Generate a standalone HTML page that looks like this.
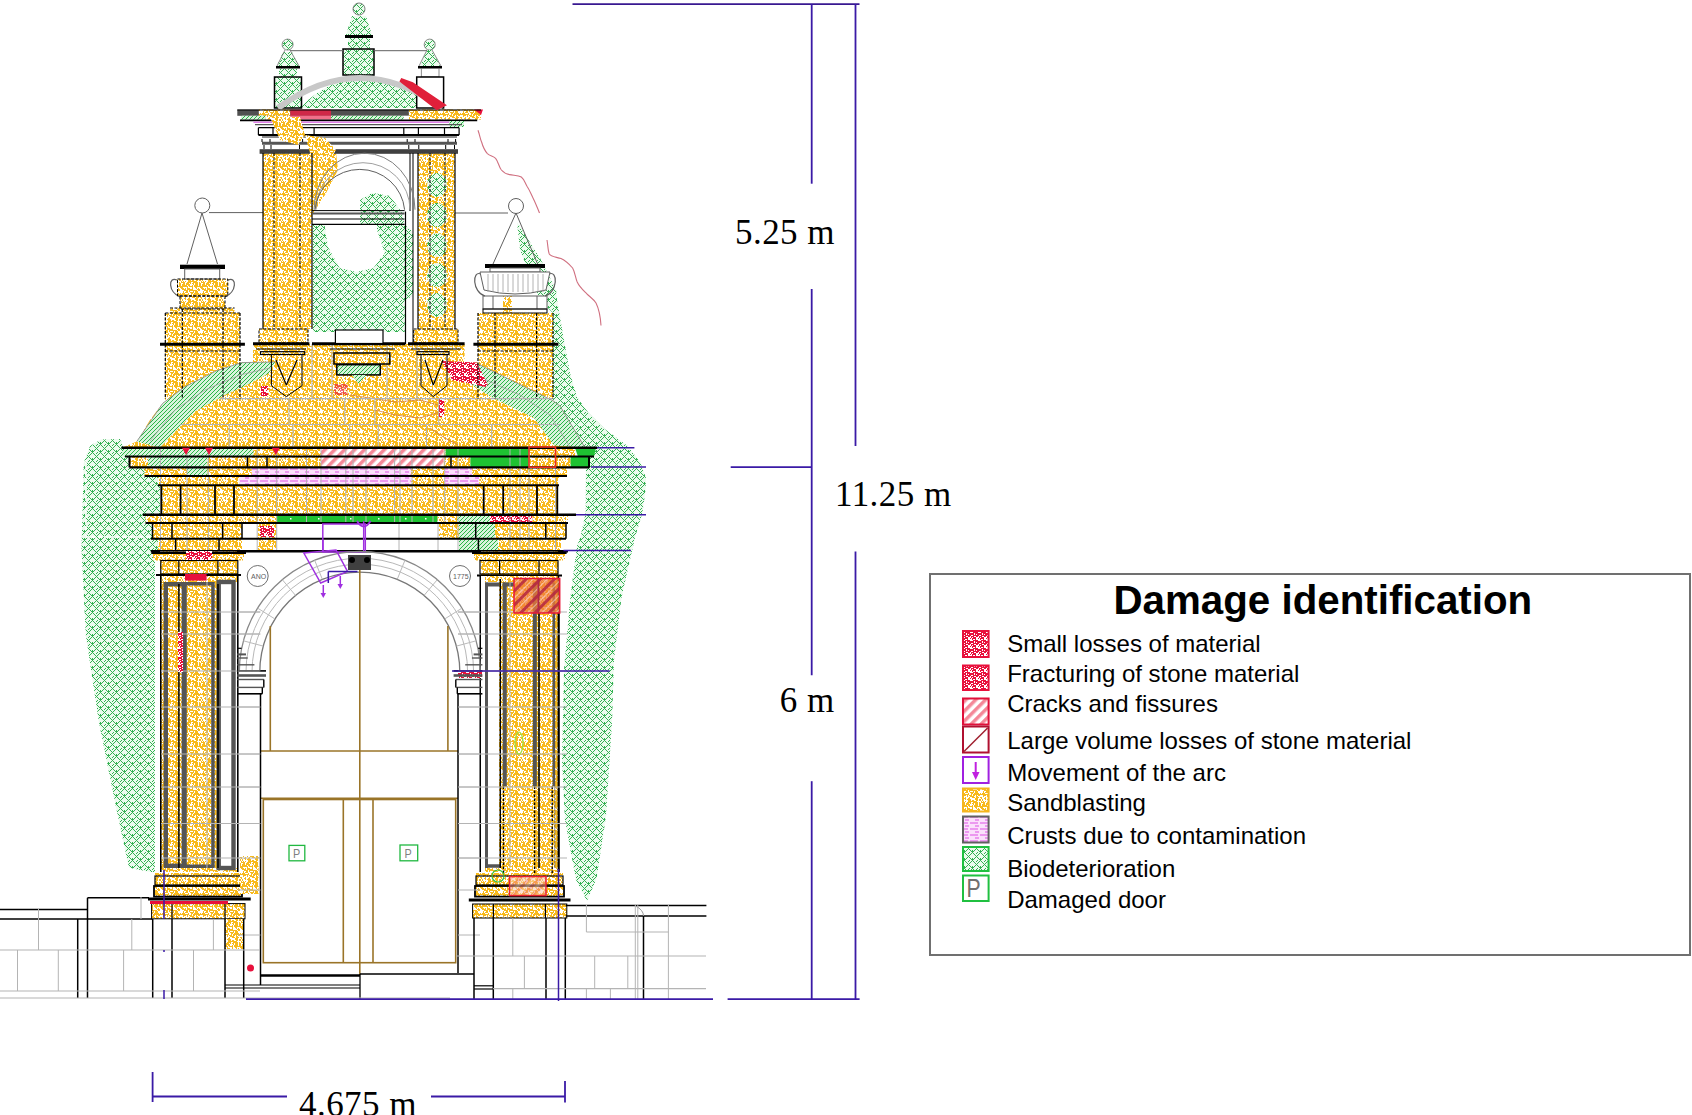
<!DOCTYPE html>
<html><head><meta charset="utf-8"><style>
html,body{margin:0;padding:0;background:#fff;width:1692px;height:1115px;overflow:hidden}
svg{display:block}
</style></head><body>
<svg width="1692" height="1115" viewBox="0 0 1692 1115">
<defs><pattern id="yel" width="20" height="20" patternUnits="userSpaceOnUse"><rect width="20" height="20" fill="#f8ba1c"/><g fill="#fff"><rect x="1" y="0" width="1" height="1"/><rect x="3" y="0" width="5" height="1"/><rect x="11" y="0" width="1" height="1"/><rect x="14" y="0" width="2" height="1"/><rect x="18" y="0" width="1" height="1"/><rect x="0" y="1" width="1" height="1"/><rect x="2" y="1" width="1" height="1"/><rect x="4" y="1" width="1" height="1"/><rect x="6" y="1" width="2" height="1"/><rect x="17" y="1" width="3" height="1"/><rect x="0" y="2" width="1" height="1"/><rect x="5" y="2" width="2" height="1"/><rect x="11" y="2" width="2" height="1"/><rect x="18" y="2" width="1" height="1"/><rect x="1" y="3" width="2" height="1"/><rect x="5" y="3" width="1" height="1"/><rect x="9" y="3" width="1" height="1"/><rect x="11" y="3" width="1" height="1"/><rect x="14" y="3" width="1" height="1"/><rect x="18" y="3" width="1" height="1"/><rect x="1" y="4" width="1" height="1"/><rect x="5" y="4" width="1" height="1"/><rect x="10" y="4" width="3" height="1"/><rect x="14" y="4" width="1" height="1"/><rect x="18" y="4" width="1" height="1"/><rect x="1" y="5" width="1" height="1"/><rect x="7" y="5" width="1" height="1"/><rect x="10" y="5" width="2" height="1"/><rect x="13" y="5" width="1" height="1"/><rect x="18" y="5" width="1" height="1"/><rect x="8" y="6" width="1" height="1"/><rect x="13" y="6" width="1" height="1"/><rect x="3" y="7" width="4" height="1"/><rect x="8" y="7" width="4" height="1"/><rect x="13" y="7" width="2" height="1"/><rect x="17" y="7" width="3" height="1"/><rect x="0" y="8" width="1" height="1"/><rect x="4" y="8" width="1" height="1"/><rect x="6" y="8" width="1" height="1"/><rect x="10" y="8" width="2" height="1"/><rect x="13" y="8" width="3" height="1"/><rect x="17" y="8" width="1" height="1"/><rect x="19" y="8" width="1" height="1"/><rect x="0" y="9" width="2" height="1"/><rect x="6" y="9" width="1" height="1"/><rect x="13" y="9" width="4" height="1"/><rect x="0" y="10" width="4" height="1"/><rect x="8" y="10" width="1" height="1"/><rect x="17" y="10" width="1" height="1"/><rect x="0" y="11" width="3" height="1"/><rect x="4" y="11" width="2" height="1"/><rect x="8" y="11" width="1" height="1"/><rect x="10" y="11" width="3" height="1"/><rect x="14" y="11" width="1" height="1"/><rect x="18" y="11" width="2" height="1"/><rect x="0" y="12" width="3" height="1"/><rect x="4" y="12" width="1" height="1"/><rect x="8" y="12" width="2" height="1"/><rect x="14" y="12" width="1" height="1"/><rect x="18" y="12" width="2" height="1"/><rect x="1" y="13" width="1" height="1"/><rect x="5" y="13" width="3" height="1"/><rect x="9" y="13" width="2" height="1"/><rect x="13" y="13" width="1" height="1"/><rect x="19" y="13" width="1" height="1"/><rect x="9" y="14" width="2" height="1"/><rect x="12" y="14" width="1" height="1"/><rect x="0" y="15" width="3" height="1"/><rect x="6" y="15" width="1" height="1"/><rect x="8" y="15" width="1" height="1"/><rect x="12" y="15" width="1" height="1"/><rect x="15" y="15" width="1" height="1"/><rect x="17" y="15" width="1" height="1"/><rect x="0" y="16" width="3" height="1"/><rect x="4" y="16" width="3" height="1"/><rect x="8" y="16" width="2" height="1"/><rect x="14" y="16" width="2" height="1"/><rect x="18" y="16" width="2" height="1"/><rect x="2" y="17" width="3" height="1"/><rect x="6" y="17" width="3" height="1"/><rect x="10" y="17" width="2" height="1"/><rect x="15" y="17" width="1" height="1"/><rect x="19" y="17" width="1" height="1"/><rect x="0" y="18" width="1" height="1"/><rect x="2" y="18" width="2" height="1"/><rect x="6" y="18" width="2" height="1"/><rect x="10" y="18" width="5" height="1"/><rect x="18" y="18" width="2" height="1"/><rect x="1" y="19" width="1" height="1"/><rect x="3" y="19" width="2" height="1"/><rect x="6" y="19" width="1" height="1"/><rect x="11" y="19" width="4" height="1"/><rect x="18" y="19" width="1" height="1"/></g></pattern><pattern id="grn" width="8" height="8" patternUnits="userSpaceOnUse"><rect width="8" height="8" fill="#ecfbee"/><g fill="#34b052"><rect x="0" y="0" width="1" height="1"/><rect x="0" y="5" width="1" height="1"/><rect x="1" y="1" width="1" height="1"/><rect x="1" y="4" width="1" height="1"/><rect x="1" y="7" width="1" height="1"/><rect x="2" y="2" width="1" height="1"/><rect x="2" y="6" width="1" height="1"/><rect x="3" y="3" width="1" height="1"/><rect x="3" y="5" width="1" height="1"/><rect x="4" y="2" width="1" height="1"/><rect x="4" y="3" width="1" height="1"/><rect x="4" y="4" width="1" height="1"/><rect x="5" y="3" width="1" height="1"/><rect x="5" y="5" width="1" height="1"/><rect x="6" y="2" width="1" height="1"/><rect x="6" y="6" width="1" height="1"/><rect x="7" y="1" width="1" height="1"/><rect x="7" y="7" width="1" height="1"/></g></pattern><pattern id="grn2" width="4" height="4" patternUnits="userSpaceOnUse"><rect width="4" height="4" fill="#d8f4dc"/><g fill="#2ab446"><rect x="0" y="0" width="1" height="1"/><rect x="2" y="2" width="1" height="1"/><rect x="1" y="3" width="1" height="1"/><rect x="3" y="1" width="1" height="1"/></g></pattern><pattern id="red" width="8" height="8" patternUnits="userSpaceOnUse"><rect width="8" height="8" fill="#e8103c"/><g fill="#fff"><rect x="2" y="0" width="3" height="1"/><rect x="6" y="1" width="1" height="1"/><rect x="0" y="2" width="1" height="1"/><rect x="6" y="2" width="1" height="1"/><rect x="3" y="3" width="2" height="1"/><rect x="2" y="4" width="1" height="1"/><rect x="6" y="4" width="2" height="1"/><rect x="0" y="5" width="3" height="1"/><rect x="4" y="5" width="1" height="1"/><rect x="0" y="6" width="2" height="1"/><rect x="3" y="6" width="1" height="1"/><rect x="0" y="7" width="4" height="1"/><rect x="5" y="7" width="2" height="1"/></g></pattern><pattern id="crk" width="7" height="7" patternUnits="userSpaceOnUse" patternTransform="rotate(45)"><rect width="7" height="7" fill="#fff"/><rect width="3.5" height="7" fill="#f48898"/></pattern><pattern id="dcrk" width="10" height="10" patternUnits="userSpaceOnUse" patternTransform="rotate(45)"><rect x="0" width="3" height="10" fill="#b02040" opacity="0.8"/><rect x="6" width="1" height="10" fill="#fff" opacity="0.5"/></pattern><pattern id="pnk" width="10" height="6" patternUnits="userSpaceOnUse"><rect width="10" height="6" fill="#fbe0fb"/><rect x="0" y="0" width="8" height="2" fill="#ec98f0"/><rect x="5" y="3" width="4" height="2" fill="#ec98f0"/></pattern></defs>
<rect width="1692" height="1115" fill="#fff"/>
<polygon points="100.9,439.4 120,439 124,448 161,448 161,552 155,552 155,872 150.4,872 128.9,867.7 116,807 98.7,721 85.8,635 81.5,549 83.7,463 90,446" fill="url(#grn)" stroke="none" stroke-width="1" />
<polygon points="517,222 526,236 540,258 556,290 557,300 564,340 570,373 577,397 588.5,413 604.6,429 627,445.4 640,461.5 646,478 645.5,490 642.4,513 635.3,536.4 621.6,597 614,660 612,722 606,816 596.5,879 587,901 576,880 565,820 562,760 564,670 570,600 577,546 580.4,537 585.7,513 586,467 594.5,447.7 560,447 553,400 553,313 540,300 528,270 520,250" fill="url(#grn)" stroke="none" stroke-width="1" />
<path d="M313,224.8 L324.5,224.8 L328,247 L339.6,268 L356.5,272 L373.5,268 L384.8,253 L377,230 L377,224.8 L360,224.8 L360,200 L372,192.8 L390,196 L401.7,212 L404.6,224.8 L413,232 L413,296 L404.6,300 L404.6,332 L313,332 Z" fill="url(#grn)" stroke="none" stroke-width="1" />
<polygon points="343,49 374,49 374,75 343,75" fill="url(#grn)" stroke="none" stroke-width="1" />
<polygon points="348,38 370,38 370,49 348,49" fill="url(#grn)" stroke="none" stroke-width="1" />
<polygon points="352,16 366,16 372,35 346,35" fill="url(#grn)" stroke="none" stroke-width="1" />
<circle cx="359" cy="9" r="6" fill="url(#grn)" stroke="none" stroke-width="1" />
<polygon points="274.5,77 301.5,77 301.5,108 274.5,108" fill="url(#grn)" stroke="none" stroke-width="1" />
<polygon points="279,68.5 297,68.5 297,77 279,77" fill="url(#grn)" stroke="none" stroke-width="1" />
<polygon points="283,52 292,52 299,66 277,66" fill="url(#grn)" stroke="none" stroke-width="1" />
<path d="M300,108 C315,92 330,84 345,80 L375,78 C395,82 420,92 440,108 Z" fill="url(#grn)" stroke="none" stroke-width="1" />
<polygon points="122,447.7 136.8,441.5 150,420 162.6,403.4 184.4,387 216,371 241.5,362.6 253,362 253,344 474,344 478,362.6 520,385 553,400.7 560,406 585,447.7" fill="url(#yel)" stroke="none" stroke-width="1" />
<rect x="170" y="308" width="64.6" height="5" fill="url(#yel)" stroke="none" stroke-width="1" />
<rect x="165.3" y="313" width="74.7" height="87" fill="url(#yel)" stroke="none" stroke-width="1" />
<rect x="478" y="313" width="75" height="87" fill="url(#yel)" stroke="none" stroke-width="1" />
<rect x="177.5" y="279" width="50.3" height="17" fill="url(#yel)" stroke="none" stroke-width="1" />
<rect x="180" y="296" width="45" height="13" fill="url(#yel)" stroke="none" stroke-width="1" />
<rect x="483" y="296" width="64" height="13" fill="#fff" stroke="none" stroke-width="1" />
<rect x="503" y="296" width="9" height="17" fill="url(#yel)" stroke="none" stroke-width="1" />
<rect x="263" y="153" width="49" height="176" fill="url(#yel)" stroke="none" stroke-width="1" />
<rect x="259" y="329" width="49" height="15" fill="url(#yel)" stroke="none" stroke-width="1" />
<rect x="418" y="153" width="37" height="176" fill="url(#yel)" stroke="none" stroke-width="1" />
<rect x="413.7" y="329" width="44.3" height="15" fill="url(#yel)" stroke="none" stroke-width="1" />
<polygon points="312,153 336,153 338,170 325,195 312,215" fill="url(#yel)" stroke="none" stroke-width="1" />
<rect x="464.6" y="330" width="13.4" height="32.6" fill="#fff" stroke="none" stroke-width="1" />
<polygon points="136.8,441.5 162.6,403.4 184.4,387 216,371 241.5,362.6 275.4,362 268.6,373.5 245.5,385.7 225,395 195,411.6 169.4,437.4 160,447.7" fill="url(#grn2)" stroke="none" stroke-width="1" />
<polygon points="478,364 553,400.7 560,406 585,447.7 554,445.5 534,418 493,398 471.4,384.4" fill="url(#grn2)" stroke="none" stroke-width="1" />
<polyline points="136.8,441.5 162.6,403.4 184.4,387 216,371 241.5,362.6 275.4,362" fill="none" stroke="#909090" stroke-width="0.9" />
<polyline points="150,441 175,410 205,390 240,375 270,368" fill="none" stroke="#a0a0a0" stroke-width="0.8" />
<polyline points="478,364 553,400.7 560,406 585,447.7" fill="none" stroke="#909090" stroke-width="0.9" />
<polyline points="475,375 520,395 550,415 570,447" fill="none" stroke="#a0a0a0" stroke-width="0.8" />
<polyline points="350,395 370,398 395,402 420,400 438,405" fill="none" stroke="#d08040" stroke-width="0.8" />
<polyline points="375,410 395,415 420,418 440,412" fill="none" stroke="#d08040" stroke-width="0.8" />
<polyline points="430,428 445,438 458,445" fill="none" stroke="#d08040" stroke-width="0.8" />
<polygon points="441.5,361 476.8,362.6 487.7,384.4 486.3,387 452.3,380.3" fill="url(#red)" stroke="none" stroke-width="1" />
<rect x="334" y="384" width="13.7" height="11" fill="url(#red)" stroke="none" stroke-width="1" opacity="0.6"/>
<rect x="438.7" y="399" width="5.5" height="18" fill="url(#red)" stroke="none" stroke-width="1" />
<rect x="261" y="386" width="7" height="10" fill="url(#red)" stroke="none" stroke-width="1" />
<ellipse cx="437" cy="185" rx="10" ry="12" fill="url(#grn)"/>
<ellipse cx="437" cy="215" rx="10" ry="12" fill="url(#grn)"/>
<ellipse cx="437" cy="245" rx="10" ry="12" fill="url(#grn)"/>
<ellipse cx="437" cy="275" rx="10" ry="12" fill="url(#grn)"/>
<ellipse cx="437" cy="305" rx="10" ry="12" fill="url(#grn)"/>
<line x1="219.7" y1="398.6" x2="553" y2="398.6" stroke="#b4b4b4" stroke-width="1.2" />
<line x1="180.3" y1="424.5" x2="560" y2="424.5" stroke="#b4b4b4" stroke-width="1.2" />
<line x1="289" y1="399" x2="289" y2="424.5" stroke="#b4b4b4" stroke-width="1" />
<line x1="344.8" y1="399" x2="344.8" y2="424.5" stroke="#b4b4b4" stroke-width="1" />
<line x1="374.9" y1="399" x2="374.9" y2="424.5" stroke="#b4b4b4" stroke-width="1" />
<line x1="438.7" y1="399" x2="438.7" y2="424.5" stroke="#b4b4b4" stroke-width="1" />
<line x1="229.2" y1="424.5" x2="229.2" y2="447" stroke="#b4b4b4" stroke-width="1" />
<line x1="293" y1="424.5" x2="293" y2="447" stroke="#b4b4b4" stroke-width="1" />
<line x1="349.7" y1="424.5" x2="349.7" y2="447" stroke="#b4b4b4" stroke-width="1" />
<line x1="378.3" y1="424.5" x2="378.3" y2="447" stroke="#b4b4b4" stroke-width="1" />
<line x1="426.5" y1="424.5" x2="426.5" y2="447" stroke="#b4b4b4" stroke-width="1" />
<line x1="491.7" y1="424.5" x2="491.7" y2="447" stroke="#b4b4b4" stroke-width="1" />
<line x1="312" y1="344" x2="312" y2="399" stroke="#b4b4b4" stroke-width="1" />
<line x1="332" y1="344" x2="332" y2="399" stroke="#b4b4b4" stroke-width="1" />
<line x1="387" y1="344" x2="387" y2="399" stroke="#b4b4b4" stroke-width="1" />
<line x1="417" y1="344" x2="417" y2="399" stroke="#b4b4b4" stroke-width="1" />
<line x1="253" y1="343.8" x2="309.4" y2="343.8" stroke="#000" stroke-width="3" />
<line x1="312" y1="343.8" x2="405.4" y2="343.8" stroke="#000" stroke-width="3" />
<line x1="408" y1="343.8" x2="464.6" y2="343.8" stroke="#000" stroke-width="3" />
<line x1="256" y1="349" x2="306" y2="349" stroke="#000" stroke-width="1.2" />
<line x1="411" y1="349" x2="461" y2="349" stroke="#000" stroke-width="1.2" />
<rect x="260.5" y="351.7" width="44.2" height="2.8" fill="none" stroke="#000" stroke-width="1.2" />
<rect x="417" y="351.7" width="32" height="2.8" fill="none" stroke="#000" stroke-width="1.2" />
<polygon points="271.4,354.5 302,354.5 302,385.7 286.3,396.6 271.4,385.7" fill="none" stroke="#000" stroke-width="1" />
<polygon points="421,354.5 447,354.5 447,385.7 433.3,396.6 421,385.7" fill="none" stroke="#000" stroke-width="1" />
<line x1="276" y1="360" x2="286.3" y2="385" stroke="#000" stroke-width="1.2" />
<line x1="297" y1="360" x2="286.3" y2="385" stroke="#000" stroke-width="1.2" />
<line x1="425" y1="360" x2="433.3" y2="385" stroke="#000" stroke-width="1.2" />
<line x1="443" y1="360" x2="433.3" y2="385" stroke="#000" stroke-width="1.2" />
<line x1="330" y1="349" x2="395" y2="349" stroke="#000" stroke-width="1.2" />
<rect x="334" y="353" width="55.8" height="11" fill="none" stroke="#000" stroke-width="1.5" />
<rect x="336.8" y="364.7" width="43.5" height="10.2" fill="url(#grn2)" stroke="#000" stroke-width="1.5" />
<polygon points="352,375 366,375 358.5,384" fill="url(#grn2)" stroke="none" stroke-width="1" />
<line x1="160" y1="344.3" x2="244.9" y2="344.3" stroke="#000" stroke-width="3" />
<line x1="473.4" y1="344.3" x2="558.4" y2="344.3" stroke="#000" stroke-width="3" />
<line x1="165.3" y1="313" x2="165.3" y2="399" stroke="#000" stroke-width="1.2" stroke-dasharray="3,1.5"/>
<line x1="240" y1="313" x2="240" y2="399" stroke="#000" stroke-width="1.2" stroke-dasharray="3,1.5"/>
<line x1="182.3" y1="309" x2="182.3" y2="399" stroke="#000" stroke-width="1.2" stroke-dasharray="3,1.5"/>
<line x1="223" y1="309" x2="223" y2="399" stroke="#000" stroke-width="1.2" stroke-dasharray="3,1.5"/>
<line x1="478" y1="313" x2="478" y2="399" stroke="#000" stroke-width="1.2" stroke-dasharray="3,1.5"/>
<line x1="553" y1="313" x2="553" y2="399" stroke="#000" stroke-width="1.2" stroke-dasharray="3,1.5"/>
<line x1="495" y1="313" x2="495" y2="399" stroke="#000" stroke-width="1.2" stroke-dasharray="3,1.5"/>
<line x1="536.6" y1="313" x2="536.6" y2="399" stroke="#000" stroke-width="1.2" stroke-dasharray="3,1.5"/>
<line x1="165.3" y1="351" x2="240" y2="351" stroke="#000" stroke-width="1.2" stroke-dasharray="3,1.5"/>
<line x1="478" y1="351" x2="553" y2="351" stroke="#000" stroke-width="1.2" stroke-dasharray="3,1.5"/>
<line x1="170" y1="308" x2="234.6" y2="308" stroke="#000" stroke-width="1.2" stroke-dasharray="3,1.5"/>
<line x1="165.3" y1="313" x2="240" y2="313" stroke="#000" stroke-width="1.2" stroke-dasharray="3,1.5"/>
<circle cx="202.3" cy="205.5" r="7.5" fill="#fff" stroke="#606060" stroke-width="1" />
<line x1="209" y1="212.6" x2="263" y2="212.6" stroke="#606060" stroke-width="1" />
<line x1="202" y1="213" x2="187" y2="264" stroke="#606060" stroke-width="1" />
<line x1="202" y1="213" x2="217.5" y2="264" stroke="#606060" stroke-width="1" />
<rect x="180" y="264.7" width="45" height="4.3" fill="#000" stroke="none" stroke-width="1" />
<rect x="184.7" y="269" width="35" height="10" fill="#fff" stroke="#606060" stroke-width="1" />
<path d="M177,280 C168,276 168,292 180,297" fill="none" stroke="#606060" stroke-width="1.2" />
<path d="M228,280 C237,276 237,292 225,297" fill="none" stroke="#606060" stroke-width="1.2" />
<rect x="177.5" y="279" width="50.3" height="17" fill="none" stroke="#000" stroke-width="1" stroke-dasharray="3,1.5"/>
<rect x="180" y="296" width="45" height="13" fill="none" stroke="#000" stroke-width="1" stroke-dasharray="3,1.5"/>
<circle cx="516" cy="206" r="7.5" fill="#fff" stroke="#606060" stroke-width="1" />
<line x1="455" y1="213" x2="508" y2="213" stroke="#606060" stroke-width="1" />
<line x1="516" y1="213" x2="493" y2="264" stroke="#606060" stroke-width="1" />
<line x1="516" y1="213" x2="537.6" y2="264" stroke="#606060" stroke-width="1" />
<rect x="485" y="264" width="60" height="4" fill="#000" stroke="none" stroke-width="1" />
<rect x="490" y="268" width="50" height="4" fill="#fff" stroke="#606060" stroke-width="1" />
<path d="M481,274 C472,270 472,292 485,296" fill="none" stroke="#606060" stroke-width="1.2" />
<path d="M549,274 C558,270 558,292 545,296" fill="none" stroke="#606060" stroke-width="1.2" />
<path d="M480,272 L550,272 L546,290 Q515,298 484,290 Z" fill="#fff" stroke="#606060" stroke-width="1" />
<line x1="488" y1="274" x2="488" y2="292" stroke="#a0a0a0" stroke-width="0.8" />
<line x1="493" y1="274" x2="493" y2="292" stroke="#a0a0a0" stroke-width="0.8" />
<line x1="498" y1="274" x2="498" y2="292" stroke="#a0a0a0" stroke-width="0.8" />
<line x1="503" y1="274" x2="503" y2="292" stroke="#a0a0a0" stroke-width="0.8" />
<line x1="508" y1="274" x2="508" y2="292" stroke="#a0a0a0" stroke-width="0.8" />
<line x1="513" y1="274" x2="513" y2="292" stroke="#a0a0a0" stroke-width="0.8" />
<line x1="518" y1="274" x2="518" y2="292" stroke="#a0a0a0" stroke-width="0.8" />
<line x1="523" y1="274" x2="523" y2="292" stroke="#a0a0a0" stroke-width="0.8" />
<line x1="528" y1="274" x2="528" y2="292" stroke="#a0a0a0" stroke-width="0.8" />
<line x1="533" y1="274" x2="533" y2="292" stroke="#a0a0a0" stroke-width="0.8" />
<line x1="538" y1="274" x2="538" y2="292" stroke="#a0a0a0" stroke-width="0.8" />
<line x1="543" y1="274" x2="543" y2="292" stroke="#a0a0a0" stroke-width="0.8" />
<rect x="483" y="296" width="64" height="13" fill="none" stroke="#606060" stroke-width="1" />
<line x1="493" y1="296" x2="493" y2="309" stroke="#606060" stroke-width="1" />
<line x1="537" y1="296" x2="537" y2="309" stroke="#606060" stroke-width="1" />
<rect x="483" y="309" width="64" height="4" fill="none" stroke="#000" stroke-width="1" />
<circle cx="359" cy="9" r="6" fill="none" stroke="#606060" stroke-width="0.8" />
<rect x="345" y="35" width="28" height="3" fill="#000" stroke="none" stroke-width="1" />
<rect x="343" y="49" width="31" height="26" fill="none" stroke="#000" stroke-width="1.5" />
<line x1="290" y1="50.7" x2="343" y2="50.7" stroke="#606060" stroke-width="1" />
<line x1="374" y1="50.7" x2="427" y2="50.7" stroke="#606060" stroke-width="1" />
<rect x="276" y="66" width="24" height="2.5" fill="#000" stroke="none" stroke-width="1" />
<rect x="418" y="66" width="24" height="2.5" fill="#000" stroke="none" stroke-width="1" />
<circle cx="287.6" cy="44.6" r="5.5" fill="url(#grn)" stroke="#707070" stroke-width="0.8" />
<circle cx="429.7" cy="44.6" r="5.5" fill="url(#grn)" stroke="#707070" stroke-width="0.8" />
<polygon points="427,50 432,50 440,66 420,66" fill="url(#grn)" stroke="none" stroke-width="1" />
<rect x="421.3" y="68.5" width="17.7" height="8.5" fill="#fff" stroke="#707070" stroke-width="0.8" />
<line x1="285" y1="50" x2="277" y2="66" stroke="#707070" stroke-width="0.8" />
<line x1="290" y1="50" x2="299" y2="66" stroke="#707070" stroke-width="0.8" />
<line x1="427" y1="50" x2="419" y2="66" stroke="#707070" stroke-width="0.8" />
<line x1="432" y1="50" x2="441" y2="66" stroke="#707070" stroke-width="0.8" />
<rect x="274.5" y="77" width="27" height="31" fill="none" stroke="#000" stroke-width="1.5" />
<rect x="416.7" y="77" width="26.9" height="31" fill="#fff" stroke="#000" stroke-width="1.5" />
<path d="M278,108 Q360,48 442,108" fill="none" stroke="#c8c8c8" stroke-width="6" />
<rect x="237.3" y="109.6" width="243.7" height="6.2" fill="#505050" stroke="none" stroke-width="1" />
<rect x="258.8" y="109.6" width="31.5" height="6.2" fill="url(#yel)" stroke="none" stroke-width="1" />
<rect x="290.3" y="109.6" width="40.7" height="6.2" fill="#d02848" stroke="none" stroke-width="1" />
<rect x="408.8" y="109.6" width="72.2" height="10" fill="url(#yel)" stroke="none" stroke-width="1" />
<polygon points="474,109.6 483,109.6 481,115" fill="#e8103c" stroke="none" stroke-width="1" />
<rect x="241" y="115.8" width="24.7" height="3.8" fill="url(#grn2)" stroke="none" stroke-width="1" />
<rect x="265.7" y="115.8" width="24.6" height="3.8" fill="url(#yel)" stroke="none" stroke-width="1" />
<rect x="290.3" y="115.8" width="40.7" height="3.8" fill="#f0708a" stroke="none" stroke-width="1" />
<rect x="331" y="115.8" width="72.8" height="3.8" fill="url(#grn2)" stroke="none" stroke-width="1" />
<rect x="403.8" y="115.8" width="5" height="3.8" fill="#fff" stroke="none" stroke-width="1" />
<line x1="237.3" y1="110" x2="481" y2="110" stroke="#000" stroke-width="1.2" />
<line x1="240" y1="120.4" x2="477.2" y2="120.4" stroke="#000" stroke-width="1.6" />
<line x1="253.4" y1="122.2" x2="449.5" y2="122.2" stroke="#e080e8" stroke-width="1.6" />
<rect x="449.5" y="121" width="14.5" height="6" fill="url(#grn2)" stroke="none" stroke-width="1" />
<line x1="255" y1="124.6" x2="462" y2="124.6" stroke="#555" stroke-width="1.2" />
<rect x="258.4" y="128.4" width="200.7" height="5.8" fill="#fff" stroke="none" stroke-width="1" />
<line x1="258.4" y1="127.7" x2="459.1" y2="127.7" stroke="#000" stroke-width="1.2" />
<line x1="258.4" y1="135" x2="459.1" y2="135" stroke="#000" stroke-width="2.2" />
<line x1="258.4" y1="127.7" x2="258.4" y2="135" stroke="#000" stroke-width="1.2" />
<line x1="273" y1="127.7" x2="273" y2="135" stroke="#000" stroke-width="1.2" />
<line x1="314.1" y1="127.7" x2="314.1" y2="135" stroke="#000" stroke-width="1.2" />
<line x1="403.8" y1="127.7" x2="403.8" y2="135" stroke="#000" stroke-width="1.2" />
<line x1="418.4" y1="127.7" x2="418.4" y2="135" stroke="#000" stroke-width="1.2" />
<line x1="444.5" y1="127.7" x2="444.5" y2="135" stroke="#000" stroke-width="1.2" />
<line x1="459.1" y1="127.7" x2="459.1" y2="135" stroke="#000" stroke-width="1.2" />
<line x1="262" y1="137" x2="457" y2="137" stroke="#666" stroke-width="1.5" />
<line x1="262" y1="139" x2="262" y2="142" stroke="#000" stroke-width="1" />
<line x1="270" y1="139" x2="270" y2="142" stroke="#000" stroke-width="1" />
<line x1="302.6" y1="139" x2="302.6" y2="142" stroke="#000" stroke-width="1" />
<line x1="310.7" y1="139" x2="310.7" y2="142" stroke="#000" stroke-width="1" />
<line x1="407.2" y1="139" x2="407.2" y2="142" stroke="#000" stroke-width="1" />
<line x1="415" y1="139" x2="415" y2="142" stroke="#000" stroke-width="1" />
<line x1="448" y1="139" x2="448" y2="142" stroke="#000" stroke-width="1" />
<line x1="455.6" y1="139" x2="455.6" y2="142" stroke="#000" stroke-width="1" />
<line x1="262" y1="142.3" x2="457" y2="142.3" stroke="#000" stroke-width="0.8" />
<line x1="262" y1="143.5" x2="457" y2="143.5" stroke="#555" stroke-width="2.4" />
<line x1="264" y1="145" x2="264" y2="149" stroke="#000" stroke-width="1" />
<line x1="271" y1="145" x2="271" y2="149" stroke="#000" stroke-width="1" />
<line x1="299.5" y1="145" x2="299.5" y2="149" stroke="#000" stroke-width="1" />
<line x1="408.8" y1="145" x2="408.8" y2="149" stroke="#000" stroke-width="1" />
<line x1="418.8" y1="145" x2="418.8" y2="149" stroke="#000" stroke-width="1" />
<line x1="445.7" y1="145" x2="445.7" y2="149" stroke="#000" stroke-width="1" />
<line x1="454.5" y1="145" x2="454.5" y2="149" stroke="#000" stroke-width="1" />
<rect x="259.6" y="149.2" width="198.4" height="4.6" fill="#404040" stroke="none" stroke-width="1" />
<polygon points="270,117 300,117 305,135 298,145 280,140" fill="url(#yel)" stroke="none" stroke-width="1" />
<polygon points="305,135 325,138 336,150 330,160 312,160" fill="url(#yel)" stroke="none" stroke-width="1" />
<polygon points="400.6,80 412,84 443,105 437,108" fill="#e0203a" stroke="#e0203a" stroke-width="4" />
<line x1="263" y1="153" x2="263" y2="329" stroke="#000" stroke-width="1.2" />
<line x1="312" y1="153" x2="312" y2="329" stroke="#000" stroke-width="1.2" />
<line x1="418" y1="153" x2="418" y2="329" stroke="#000" stroke-width="1.2" />
<line x1="455" y1="153" x2="455" y2="329" stroke="#000" stroke-width="1.2" />
<line x1="274" y1="153" x2="274" y2="329" stroke="#000" stroke-width="1" stroke-dasharray="3,1.5"/>
<line x1="300" y1="153" x2="300" y2="329" stroke="#000" stroke-width="1" stroke-dasharray="3,1.5"/>
<line x1="430" y1="153" x2="430" y2="329" stroke="#000" stroke-width="1" stroke-dasharray="3,1.5"/>
<line x1="445" y1="153" x2="445" y2="329" stroke="#000" stroke-width="1" stroke-dasharray="3,1.5"/>
<rect x="259" y="329" width="49" height="14" fill="none" stroke="#000" stroke-width="1" stroke-dasharray="3,1.5"/>
<rect x="413.7" y="329" width="44.3" height="14" fill="none" stroke="#000" stroke-width="1" stroke-dasharray="3,1.5"/>
<line x1="405.5" y1="211.6" x2="405.5" y2="344" stroke="#000" stroke-width="1.2" />
<line x1="410" y1="153" x2="410" y2="211" stroke="#000" stroke-width="1" />
<line x1="413" y1="153" x2="413" y2="344" stroke="#000" stroke-width="1" />
<path d="M314,209.7 A50.5,56.5 0 0 1 415,209.7" fill="none" stroke="#808080" stroke-width="1" />
<path d="M316,209.7 A47,47 0 0 1 410,209.7" fill="none" stroke="#a0a0a0" stroke-width="1" />
<path d="M315,209.7 A45,44.5 0 0 1 404.6,209.7" fill="none" stroke="#606060" stroke-width="1" />
<line x1="312" y1="210.6" x2="404.6" y2="210.6" stroke="#000" stroke-width="1" />
<line x1="312" y1="213.5" x2="404.6" y2="213.5" stroke="#555" stroke-width="2" />
<line x1="312" y1="219" x2="404.6" y2="219" stroke="#000" stroke-width="1" />
<line x1="312" y1="224.4" x2="404.6" y2="224.4" stroke="#000" stroke-width="1.2" />
<rect x="335.4" y="330" width="47.6" height="13.5" fill="#fff" stroke="#000" stroke-width="1.2" />
<rect x="122" y="448" width="132" height="8.4" fill="url(#grn2)" stroke="none" stroke-width="1" />
<rect x="253.6" y="448" width="67.4" height="8.4" fill="url(#yel)" stroke="none" stroke-width="1" />
<rect x="321" y="448" width="122.8" height="8.4" fill="url(#crk)" stroke="none" stroke-width="1" />
<rect x="443.8" y="448" width="1.8" height="8.4" fill="url(#yel)" stroke="none" stroke-width="1" />
<rect x="445.6" y="448" width="83.4" height="8.4" fill="#1ec232" stroke="none" stroke-width="1" />
<rect x="529" y="448" width="27.4" height="19.2" fill="url(#yel)" stroke="none" stroke-width="1" />
<rect x="556.4" y="448" width="18.6" height="8.4" fill="url(#yel)" stroke="none" stroke-width="1" />
<polygon points="575,448 596,448 594,456.4 578,456.4" fill="#1ec232" stroke="none" stroke-width="1" />
<rect x="129.5" y="456.4" width="18.5" height="11" fill="url(#yel)" stroke="none" stroke-width="1" />
<rect x="148" y="456.4" width="59.5" height="11" fill="url(#grn2)" stroke="none" stroke-width="1" />
<rect x="207.5" y="456.4" width="113.5" height="11" fill="url(#yel)" stroke="none" stroke-width="1" />
<rect x="321" y="456.4" width="122.8" height="11" fill="url(#crk)" stroke="none" stroke-width="1" />
<rect x="443.8" y="456.4" width="26.6" height="11" fill="url(#yel)" stroke="none" stroke-width="1" />
<rect x="470.4" y="456.4" width="58.6" height="11" fill="#1ec232" stroke="none" stroke-width="1" />
<rect x="555.5" y="456.4" width="15.1" height="11" fill="url(#yel)" stroke="none" stroke-width="1" />
<rect x="570.6" y="456.4" width="18.4" height="11" fill="#1ec232" stroke="none" stroke-width="1" />
<rect x="144.6" y="467.4" width="107.2" height="8.6" fill="url(#yel)" stroke="none" stroke-width="1" />
<rect x="187" y="467.4" width="20.5" height="8.6" fill="url(#grn2)" stroke="none" stroke-width="1" />
<rect x="251.8" y="467.4" width="159.2" height="8.6" fill="url(#pnk)" stroke="none" stroke-width="1" />
<rect x="411" y="467.4" width="33.7" height="8.6" fill="url(#yel)" stroke="none" stroke-width="1" />
<rect x="444.7" y="467.4" width="27.5" height="8.6" fill="url(#pnk)" stroke="none" stroke-width="1" />
<rect x="472.2" y="467.4" width="94.8" height="8.6" fill="url(#yel)" stroke="none" stroke-width="1" />
<rect x="157.9" y="476" width="81.5" height="9.2" fill="url(#yel)" stroke="none" stroke-width="1" />
<rect x="239.4" y="476" width="171.6" height="9.2" fill="url(#pnk)" stroke="none" stroke-width="1" />
<rect x="411" y="476" width="33.7" height="9.2" fill="url(#yel)" stroke="none" stroke-width="1" />
<rect x="444.7" y="476" width="34.6" height="9.2" fill="url(#pnk)" stroke="none" stroke-width="1" />
<rect x="479.3" y="476" width="79.7" height="9.2" fill="url(#yel)" stroke="none" stroke-width="1" />
<rect x="161.4" y="485.2" width="395.9" height="29.6" fill="url(#yel)" stroke="none" stroke-width="1" />
<rect x="145.5" y="514.8" width="131.2" height="8.3" fill="url(#yel)" stroke="none" stroke-width="1" />
<rect x="276.7" y="514.8" width="160.9" height="8.3" fill="#1ec232" stroke="none" stroke-width="1" />
<rect x="437.6" y="514.8" width="19.4" height="8.3" fill="url(#yel)" stroke="none" stroke-width="1" />
<rect x="457" y="514.8" width="33" height="8.3" fill="url(#grn2)" stroke="none" stroke-width="1" />
<rect x="490" y="514.8" width="42.5" height="8.3" fill="url(#red)" stroke="none" stroke-width="1" />
<rect x="532.5" y="514.8" width="35.5" height="8.3" fill="url(#yel)" stroke="none" stroke-width="1" />
<rect x="152.5" y="523.1" width="89.5" height="15.7" fill="url(#yel)" stroke="none" stroke-width="1" />
<rect x="258" y="523.1" width="18" height="15.7" fill="url(#yel)" stroke="none" stroke-width="1" />
<rect x="260" y="526" width="14" height="11" fill="url(#red)" stroke="none" stroke-width="1" />
<rect x="438.5" y="523.1" width="20.5" height="15.7" fill="url(#yel)" stroke="none" stroke-width="1" />
<rect x="459" y="523.1" width="36" height="15.7" fill="url(#grn2)" stroke="none" stroke-width="1" />
<rect x="495" y="523.1" width="71" height="15.7" fill="url(#yel)" stroke="none" stroke-width="1" />
<rect x="157.9" y="538.8" width="85.1" height="12.5" fill="url(#yel)" stroke="none" stroke-width="1" />
<rect x="258" y="538.8" width="18" height="12.5" fill="url(#yel)" stroke="none" stroke-width="1" />
<rect x="459" y="538.8" width="39" height="12.5" fill="url(#grn2)" stroke="none" stroke-width="1" />
<rect x="498" y="538.8" width="63" height="12.5" fill="url(#yel)" stroke="none" stroke-width="1" />
<rect x="242" y="523.1" width="16" height="28.2" fill="#fff" stroke="none" stroke-width="1" />
<rect x="276" y="523.1" width="162.5" height="28.2" fill="#fff" stroke="none" stroke-width="1" />
<line x1="160.5" y1="447.7" x2="160.5" y2="523.1" stroke="#b4b4b4" stroke-width="1" />
<line x1="187" y1="447.7" x2="187" y2="523.1" stroke="#b4b4b4" stroke-width="1" />
<line x1="208.4" y1="447.7" x2="208.4" y2="523.1" stroke="#b4b4b4" stroke-width="1" />
<line x1="257.2" y1="447.7" x2="257.2" y2="523.1" stroke="#b4b4b4" stroke-width="1" />
<line x1="276.7" y1="447.7" x2="276.7" y2="523.1" stroke="#b4b4b4" stroke-width="1" />
<line x1="306.5" y1="447.7" x2="306.5" y2="523.1" stroke="#b4b4b4" stroke-width="1" />
<line x1="321" y1="447.7" x2="321" y2="523.1" stroke="#b4b4b4" stroke-width="1" />
<line x1="345.8" y1="447.7" x2="345.8" y2="523.1" stroke="#b4b4b4" stroke-width="1" />
<line x1="353" y1="447.7" x2="353" y2="523.1" stroke="#b4b4b4" stroke-width="1" />
<line x1="366" y1="447.7" x2="366" y2="523.1" stroke="#b4b4b4" stroke-width="1" />
<line x1="394.6" y1="447.7" x2="394.6" y2="523.1" stroke="#b4b4b4" stroke-width="1" />
<line x1="400" y1="447.7" x2="400" y2="523.1" stroke="#b4b4b4" stroke-width="1" />
<line x1="412" y1="447.7" x2="412" y2="523.1" stroke="#b4b4b4" stroke-width="1" />
<line x1="433" y1="447.7" x2="433" y2="523.1" stroke="#b4b4b4" stroke-width="1" />
<line x1="444.7" y1="447.7" x2="444.7" y2="523.1" stroke="#b4b4b4" stroke-width="1" />
<line x1="458" y1="447.7" x2="458" y2="523.1" stroke="#b4b4b4" stroke-width="1" />
<line x1="510" y1="447.7" x2="510" y2="523.1" stroke="#b4b4b4" stroke-width="1" />
<line x1="520" y1="447.7" x2="520" y2="523.1" stroke="#b4b4b4" stroke-width="1" />
<line x1="529" y1="447.7" x2="529" y2="523.1" stroke="#b4b4b4" stroke-width="1" />
<line x1="555.5" y1="447.7" x2="555.5" y2="523.1" stroke="#b4b4b4" stroke-width="1" />
<line x1="160.5" y1="523.1" x2="160.5" y2="551.3" stroke="#b4b4b4" stroke-width="1" />
<line x1="187" y1="523.1" x2="187" y2="551.3" stroke="#b4b4b4" stroke-width="1" />
<line x1="208.4" y1="523.1" x2="208.4" y2="551.3" stroke="#b4b4b4" stroke-width="1" />
<line x1="257.2" y1="523.1" x2="257.2" y2="551.3" stroke="#b4b4b4" stroke-width="1" />
<line x1="276.7" y1="523.1" x2="276.7" y2="551.3" stroke="#b4b4b4" stroke-width="1" />
<line x1="399" y1="523.1" x2="399" y2="551.3" stroke="#b4b4b4" stroke-width="1" />
<line x1="438" y1="523.1" x2="438" y2="551.3" stroke="#b4b4b4" stroke-width="1" />
<line x1="458" y1="523.1" x2="458" y2="551.3" stroke="#b4b4b4" stroke-width="1" />
<line x1="510" y1="523.1" x2="510" y2="551.3" stroke="#b4b4b4" stroke-width="1" />
<line x1="520" y1="523.1" x2="520" y2="551.3" stroke="#b4b4b4" stroke-width="1" />
<line x1="529" y1="523.1" x2="529" y2="551.3" stroke="#b4b4b4" stroke-width="1" />
<line x1="555.5" y1="523.1" x2="555.5" y2="551.3" stroke="#b4b4b4" stroke-width="1" />
<line x1="121.5" y1="447.7" x2="597.2" y2="447.7" stroke="#000" stroke-width="2.5" />
<line x1="125" y1="456.4" x2="594" y2="456.4" stroke="#000" stroke-width="2" />
<line x1="129.5" y1="467.4" x2="589.2" y2="467.4" stroke="#000" stroke-width="2.2" />
<line x1="144.6" y1="476" x2="567" y2="476" stroke="#000" stroke-width="2" />
<line x1="157.9" y1="485.2" x2="559" y2="485.2" stroke="#000" stroke-width="2" />
<line x1="142.8" y1="514.8" x2="576" y2="514.8" stroke="#000" stroke-width="2.5" />
<line x1="145.5" y1="523.1" x2="568" y2="523.1" stroke="#000" stroke-width="2" />
<line x1="150.8" y1="538.8" x2="566" y2="538.8" stroke="#000" stroke-width="2" />
<line x1="150.8" y1="551.3" x2="568" y2="551.3" stroke="#000" stroke-width="2.5" />
<line x1="129.5" y1="456.4" x2="129.5" y2="467.4" stroke="#000" stroke-width="2" />
<line x1="589" y1="456.4" x2="589" y2="467.4" stroke="#000" stroke-width="2" />
<line x1="247.4" y1="456.4" x2="247.4" y2="467.4" stroke="#000" stroke-width="1.5" />
<line x1="267" y1="456.4" x2="267" y2="467.4" stroke="#000" stroke-width="1.5" />
<line x1="451" y1="456.4" x2="451" y2="467.4" stroke="#000" stroke-width="1.5" />
<line x1="161.4" y1="485.2" x2="161.4" y2="514.8" stroke="#000" stroke-width="1.8" />
<line x1="180.6" y1="485.2" x2="180.6" y2="514.8" stroke="#000" stroke-width="1.8" />
<line x1="215" y1="485.2" x2="215" y2="514.8" stroke="#000" stroke-width="1.8" />
<line x1="234" y1="485.2" x2="234" y2="514.8" stroke="#000" stroke-width="1.8" />
<line x1="483.7" y1="485.2" x2="483.7" y2="514.8" stroke="#000" stroke-width="1.8" />
<line x1="503.2" y1="485.2" x2="503.2" y2="514.8" stroke="#000" stroke-width="1.8" />
<line x1="537" y1="485.2" x2="537" y2="514.8" stroke="#000" stroke-width="1.8" />
<line x1="557.3" y1="485.2" x2="557.3" y2="514.8" stroke="#000" stroke-width="1.8" />
<line x1="152.5" y1="523.1" x2="152.5" y2="538.8" stroke="#000" stroke-width="1.5" />
<line x1="172" y1="523.1" x2="172" y2="538.8" stroke="#000" stroke-width="1.5" />
<line x1="222.6" y1="523.1" x2="222.6" y2="538.8" stroke="#000" stroke-width="1.5" />
<line x1="242" y1="523.1" x2="242" y2="538.8" stroke="#000" stroke-width="1.5" />
<line x1="475.7" y1="523.1" x2="475.7" y2="538.8" stroke="#000" stroke-width="1.5" />
<line x1="545.8" y1="523.1" x2="545.8" y2="538.8" stroke="#000" stroke-width="1.5" />
<line x1="566" y1="523.1" x2="566" y2="538.8" stroke="#000" stroke-width="1.5" />
<line x1="175.6" y1="538.8" x2="175.6" y2="551.3" stroke="#000" stroke-width="1.5" />
<line x1="219" y1="538.8" x2="219" y2="551.3" stroke="#000" stroke-width="1.5" />
<line x1="478.4" y1="538.8" x2="478.4" y2="551.3" stroke="#000" stroke-width="1.5" />
<rect x="529" y="447" width="26.5" height="20.2" fill="none" stroke="#e83020" stroke-width="1.6" />
<polygon points="182,447.7 190,447.7 186,455" fill="#e8103c" stroke="none" stroke-width="1" />
<polygon points="205,447.7 213,447.7 209,455" fill="#e8103c" stroke="none" stroke-width="1" />
<polygon points="271.8,447.7 279.8,447.7 275.8,455" fill="#e8103c" stroke="none" stroke-width="1" />
<rect x="290" y="518" width="1.5" height="1.5" fill="#fff" stroke="none" stroke-width="1" />
<rect x="318" y="518" width="1.5" height="1.5" fill="#fff" stroke="none" stroke-width="1" />
<rect x="350" y="518" width="1.5" height="1.5" fill="#fff" stroke="none" stroke-width="1" />
<rect x="378" y="518" width="1.5" height="1.5" fill="#fff" stroke="none" stroke-width="1" />
<rect x="405" y="518" width="1.5" height="1.5" fill="#fff" stroke="none" stroke-width="1" />
<rect x="425" y="518" width="1.5" height="1.5" fill="#fff" stroke="none" stroke-width="1" />
<rect x="322.8" y="524" width="42.5" height="28" fill="none" stroke="#a030e0" stroke-width="1.5" />
<path d="M357,521 Q363.7,532 370.6,521" fill="none" stroke="#a030e0" stroke-width="1.8" />
<line x1="363.7" y1="521" x2="363.7" y2="552" stroke="#a030e0" stroke-width="1.5" />
<rect x="160" y="551.3" width="77" height="23.7" fill="url(#yel)" stroke="none" stroke-width="1" />
<rect x="153" y="552" width="91" height="8.5" fill="url(#yel)" stroke="none" stroke-width="1" />
<rect x="481" y="551.3" width="77" height="23.7" fill="url(#yel)" stroke="none" stroke-width="1" />
<rect x="474" y="552" width="91" height="8.5" fill="url(#yel)" stroke="none" stroke-width="1" />
<line x1="151.5" y1="552.7" x2="246" y2="552.7" stroke="#000" stroke-width="2.5" />
<line x1="472" y1="552.8" x2="566.6" y2="552.8" stroke="#000" stroke-width="2.5" />
<rect x="160.8" y="560.5" width="77" height="13.5" fill="none" stroke="#000" stroke-width="1.2" />
<rect x="480" y="560.5" width="78" height="13.5" fill="none" stroke="#000" stroke-width="1.2" />
<line x1="178.8" y1="560.5" x2="178.8" y2="574" stroke="#000" stroke-width="1.2" />
<line x1="217.9" y1="560.5" x2="217.9" y2="574" stroke="#000" stroke-width="1.2" />
<line x1="499.6" y1="560.5" x2="499.6" y2="574" stroke="#000" stroke-width="1.2" />
<line x1="539" y1="560.5" x2="539" y2="574" stroke="#000" stroke-width="1.2" />
<line x1="156" y1="575" x2="241" y2="575" stroke="#000" stroke-width="2.2" />
<line x1="477" y1="575.5" x2="562" y2="575.5" stroke="#000" stroke-width="2.2" />
<rect x="161" y="576" width="77" height="296" fill="url(#yel)" stroke="none" stroke-width="1" />
<rect x="480" y="576" width="78" height="296" fill="url(#yel)" stroke="none" stroke-width="1" />
<rect x="218.7" y="582" width="18.3" height="286" fill="#fff" stroke="none" stroke-width="1" />
<rect x="485" y="582" width="14" height="286" fill="#fff" stroke="none" stroke-width="1" />
<rect x="165.8" y="584.2" width="18" height="281.6" fill="none" stroke="#555" stroke-width="4.4" />
<rect x="185.05" y="583.75" width="27.9" height="282.5" fill="none" stroke="#555" stroke-width="3.5" />
<rect x="218.7" y="582" width="14.8" height="286" fill="none" stroke="#555" stroke-width="4.4" />
<line x1="486.4" y1="582.5" x2="486.4" y2="868" stroke="#555" stroke-width="3.2" />
<line x1="484.8" y1="584.5" x2="499.6" y2="584.5" stroke="#555" stroke-width="4" />
<line x1="504.75" y1="582.5" x2="504.75" y2="868" stroke="#555" stroke-width="4.1" />
<line x1="502.7" y1="584.5" x2="514" y2="584.5" stroke="#555" stroke-width="4" />
<line x1="534.8" y1="582.5" x2="534.8" y2="868" stroke="#555" stroke-width="4" />
<line x1="553.85" y1="582.5" x2="553.85" y2="868" stroke="#555" stroke-width="2.7" />
<line x1="539" y1="579" x2="539" y2="868" stroke="#000" stroke-width="1.6" />
<line x1="559" y1="579" x2="559" y2="872" stroke="#000" stroke-width="1.5" />
<rect x="501" y="786.4" width="6" height="86.6" fill="url(#yel)" stroke="none" stroke-width="1" />
<rect x="532" y="786.4" width="5" height="86.6" fill="url(#yel)" stroke="none" stroke-width="1" />
<rect x="550.5" y="786.4" width="4" height="86.6" fill="url(#yel)" stroke="none" stroke-width="1" />
<line x1="503.5" y1="786.4" x2="503.5" y2="873" stroke="#000" stroke-width="1.4" stroke-dasharray="2.5,1.5"/>
<line x1="534.6" y1="786.4" x2="534.6" y2="873" stroke="#000" stroke-width="1.4" stroke-dasharray="2.5,1.5"/>
<line x1="552.2" y1="786.4" x2="552.2" y2="873" stroke="#000" stroke-width="1.4" stroke-dasharray="2.5,1.5"/>
<line x1="484.8" y1="866" x2="501" y2="866" stroke="#555" stroke-width="3.5" />
<line x1="160.8" y1="575" x2="160.8" y2="872" stroke="#000" stroke-width="1.6" />
<line x1="237.8" y1="575" x2="237.8" y2="872" stroke="#000" stroke-width="1.6" />
<line x1="480.3" y1="575" x2="480.3" y2="872" stroke="#000" stroke-width="1.6" />
<line x1="558.4" y1="575" x2="558.4" y2="872" stroke="#000" stroke-width="1.6" />
<line x1="178.9" y1="584" x2="178.9" y2="868" stroke="#000" stroke-width="1.5" />
<line x1="218" y1="584" x2="218" y2="868" stroke="#000" stroke-width="1.5" />
<line x1="500.3" y1="579" x2="500.3" y2="868" stroke="#000" stroke-width="1.5" />
<rect x="481" y="576" width="4" height="297" fill="#fff" stroke="none" stroke-width="1" />
<line x1="161" y1="612" x2="260" y2="612" stroke="#b4b4b4" stroke-width="1.2" />
<line x1="458" y1="612" x2="567" y2="612" stroke="#b4b4b4" stroke-width="1.2" />
<line x1="161" y1="634" x2="260" y2="634" stroke="#b4b4b4" stroke-width="1.2" />
<line x1="458" y1="634" x2="567" y2="634" stroke="#b4b4b4" stroke-width="1.2" />
<line x1="161" y1="671" x2="260" y2="671" stroke="#b4b4b4" stroke-width="1.2" />
<line x1="458" y1="671" x2="567" y2="671" stroke="#b4b4b4" stroke-width="1.2" />
<line x1="161" y1="707" x2="260" y2="707" stroke="#b4b4b4" stroke-width="1.2" />
<line x1="458" y1="707" x2="567" y2="707" stroke="#b4b4b4" stroke-width="1.2" />
<line x1="161" y1="754" x2="260" y2="754" stroke="#b4b4b4" stroke-width="1.2" />
<line x1="458" y1="754" x2="567" y2="754" stroke="#b4b4b4" stroke-width="1.2" />
<line x1="161" y1="787" x2="260" y2="787" stroke="#b4b4b4" stroke-width="1.2" />
<line x1="458" y1="787" x2="567" y2="787" stroke="#b4b4b4" stroke-width="1.2" />
<line x1="161" y1="823.5" x2="260" y2="823.5" stroke="#b4b4b4" stroke-width="1.2" />
<line x1="458" y1="823.5" x2="567" y2="823.5" stroke="#b4b4b4" stroke-width="1.2" />
<line x1="161" y1="858" x2="260" y2="858" stroke="#b4b4b4" stroke-width="1.2" />
<line x1="458" y1="858" x2="567" y2="858" stroke="#b4b4b4" stroke-width="1.2" />
<line x1="207" y1="582" x2="207" y2="868" stroke="#b4b4b4" stroke-width="1" />
<line x1="510" y1="582" x2="510" y2="868" stroke="#b4b4b4" stroke-width="1" />
<rect x="155" y="873" width="86" height="24" fill="url(#yel)" stroke="none" stroke-width="1" />
<rect x="155" y="876" width="86" height="9" fill="none" stroke="#000" stroke-width="1.2" />
<rect x="154" y="886" width="88" height="10.6" fill="none" stroke="#000" stroke-width="1.8" />
<rect x="476" y="873" width="87" height="24" fill="url(#yel)" stroke="none" stroke-width="1" />
<rect x="476" y="876" width="87" height="9" fill="none" stroke="#000" stroke-width="1.2" />
<rect x="475" y="886" width="89" height="10.6" fill="none" stroke="#000" stroke-width="1.8" />
<line x1="148" y1="899" x2="250.7" y2="899" stroke="#000" stroke-width="2.8" />
<line x1="468.8" y1="900" x2="570.5" y2="900" stroke="#000" stroke-width="3" />
<rect x="151.6" y="903.6" width="93.4" height="15.2" fill="url(#yel)" stroke="#000" stroke-width="1" />
<rect x="472.6" y="904" width="94.2" height="14" fill="url(#yel)" stroke="#000" stroke-width="1" />
<line x1="172" y1="903.6" x2="172" y2="918.8" stroke="#000" stroke-width="1.2" />
<line x1="225" y1="903.6" x2="225" y2="918.8" stroke="#000" stroke-width="1.2" />
<line x1="493.4" y1="904" x2="493.4" y2="918" stroke="#000" stroke-width="1.2" />
<line x1="545.4" y1="904" x2="545.4" y2="918" stroke="#000" stroke-width="1.2" />
<rect x="225" y="919" width="19" height="30" fill="url(#yel)" stroke="none" stroke-width="1" />
<rect x="240" y="856" width="18.6" height="38" fill="url(#yel)" stroke="none" stroke-width="1" />
<rect x="186" y="551" width="26" height="9" fill="url(#red)" stroke="none" stroke-width="1" />
<rect x="185" y="574" width="21.6" height="6.6" fill="#e8103c" stroke="none" stroke-width="1" />
<rect x="178" y="632" width="5" height="40" fill="url(#red)" stroke="none" stroke-width="1" />
<rect x="150" y="901" width="78" height="3" fill="#e8103c" stroke="none" stroke-width="1" />
<rect x="514" y="578.5" width="45.7" height="34.5" fill="#f07838" stroke="none" stroke-width="1" opacity="0.75"/>
<rect x="514" y="578.5" width="45.7" height="34.5" fill="url(#dcrk)" stroke="#e81838" stroke-width="1.5" />
<line x1="538.2" y1="579" x2="538.2" y2="613" stroke="#b02848" stroke-width="1.6" />
<rect x="509.5" y="876.5" width="36.5" height="19.1" fill="#f08040" stroke="none" stroke-width="1" opacity="0.35"/>
<rect x="509.5" y="876.5" width="36.5" height="19.1" fill="url(#crk)" stroke="none" stroke-width="1" opacity="0.35"/>
<rect x="509.5" y="876.5" width="36.5" height="19.1" fill="none" stroke="#e82030" stroke-width="1.5" />
<rect x="458" y="670" width="24" height="8" fill="url(#red)" stroke="none" stroke-width="1" />
<ellipse cx="519" cy="743" rx="4" ry="11" fill="none" stroke="#a0e040" stroke-width="1.2"/>
<circle cx="498" cy="876" r="6" fill="none" stroke="#40c040" stroke-width="1.2" />
<path d="M239.3,672 A120.5,120.5 0 0 1 480.3,672" fill="none" stroke="#888" stroke-width="1.3" />
<path d="M246,672 A113.8,113.8 0 0 1 473.6,672" fill="none" stroke="#b8b8b8" stroke-width="1" />
<path d="M252,672 A107.8,107.8 0 0 1 467.6,672" fill="none" stroke="#b8b8b8" stroke-width="1" />
<path d="M259.8,672 A100,100 0 0 1 459.8,672" fill="none" stroke="#777" stroke-width="1.3" />
<line x1="263.21" y1="646.12" x2="243.41" y2="640.81" stroke="#bbb" stroke-width="1" />
<line x1="275" y1="619.01" x2="257.61" y2="608.14" stroke="#bbb" stroke-width="1" />
<line x1="295.52" y1="595.4" x2="282.34" y2="579.69" stroke="#bbb" stroke-width="1" />
<line x1="322.34" y1="579.28" x2="314.66" y2="560.27" stroke="#bbb" stroke-width="1" />
<line x1="397.26" y1="579.28" x2="404.94" y2="560.27" stroke="#bbb" stroke-width="1" />
<line x1="424.08" y1="595.4" x2="437.26" y2="579.69" stroke="#bbb" stroke-width="1" />
<line x1="444.6" y1="619.01" x2="461.99" y2="608.14" stroke="#bbb" stroke-width="1" />
<line x1="456.39" y1="646.12" x2="476.19" y2="640.81" stroke="#bbb" stroke-width="1" />
<rect x="348" y="555" width="23" height="15" fill="#404040" stroke="none" stroke-width="1" />
<circle cx="352" cy="560" r="3" fill="#000" stroke="none" stroke-width="1" />
<circle cx="367" cy="560" r="3" fill="#000" stroke="none" stroke-width="1" />
<circle cx="257.7" cy="576" r="10.5" fill="#fff" stroke="#707070" stroke-width="1" />
<circle cx="460" cy="576" r="10.5" fill="#fff" stroke="#707070" stroke-width="1" />
<text x="251" y="579" font-family="Liberation Sans, sans-serif" font-size="7" fill="#606060">ANO</text>
<text x="453" y="579" font-family="Liberation Sans, sans-serif" font-size="7" fill="#606060">1775</text>
<line x1="237.2" y1="670.9" x2="266" y2="670.9" stroke="#000" stroke-width="1.6" />
<line x1="237.2" y1="675.5" x2="266" y2="675.5" stroke="#555" stroke-width="2.6" />
<line x1="237.2" y1="679.5" x2="263.8" y2="679.5" stroke="#555" stroke-width="1.4" />
<line x1="263.8" y1="679.5" x2="263.8" y2="687.4" stroke="#000" stroke-width="1.4" />
<line x1="237.2" y1="687.4" x2="263.8" y2="687.4" stroke="#555" stroke-width="1.4" />
<line x1="262.3" y1="687.4" x2="262.3" y2="693.8" stroke="#000" stroke-width="1.4" />
<line x1="237.2" y1="693.8" x2="262.3" y2="693.8" stroke="#000" stroke-width="1.6" />
<line x1="237.2" y1="648.3" x2="241.5" y2="648.3" stroke="#000" stroke-width="1.2" />
<line x1="237.2" y1="654.4" x2="246" y2="654.4" stroke="#555" stroke-width="2" />
<line x1="237.2" y1="658" x2="247.7" y2="658" stroke="#555" stroke-width="1.4" />
<line x1="237.2" y1="664.8" x2="254.4" y2="664.8" stroke="#555" stroke-width="1.4" />
<line x1="482.4" y1="670.9" x2="453.6" y2="670.9" stroke="#000" stroke-width="1.6" />
<line x1="482.4" y1="675.5" x2="453.6" y2="675.5" stroke="#555" stroke-width="2.6" />
<line x1="482.4" y1="679.5" x2="455.8" y2="679.5" stroke="#555" stroke-width="1.4" />
<line x1="455.8" y1="679.5" x2="455.8" y2="687.4" stroke="#000" stroke-width="1.4" />
<line x1="482.4" y1="687.4" x2="455.8" y2="687.4" stroke="#555" stroke-width="1.4" />
<line x1="457.3" y1="687.4" x2="457.3" y2="693.8" stroke="#000" stroke-width="1.4" />
<line x1="482.4" y1="693.8" x2="457.3" y2="693.8" stroke="#000" stroke-width="1.6" />
<line x1="482.4" y1="648.3" x2="478.1" y2="648.3" stroke="#000" stroke-width="1.2" />
<line x1="482.4" y1="654.4" x2="473.6" y2="654.4" stroke="#555" stroke-width="2" />
<line x1="482.4" y1="658" x2="471.9" y2="658" stroke="#555" stroke-width="1.4" />
<line x1="482.4" y1="664.8" x2="465.2" y2="664.8" stroke="#555" stroke-width="1.4" />
<polygon points="303.8,553 336,550 347.5,571.5 320.7,583" fill="none" stroke="#a030e0" stroke-width="1.5" />
<line x1="323" y1="540" x2="323" y2="551.5" stroke="#a030e0" stroke-width="1.5" />
<line x1="323.3" y1="585" x2="323.3" y2="595" stroke="#a030e0" stroke-width="1.5" />
<polygon points="320.5,593 326,593 323.3,598" fill="#a030e0" stroke="none" stroke-width="1" />
<line x1="340.3" y1="576" x2="340.3" y2="586" stroke="#a030e0" stroke-width="1.5" />
<polygon points="337.5,584 343,584 340.3,589" fill="#a030e0" stroke="none" stroke-width="1" />
<line x1="328.3" y1="571.5" x2="357.5" y2="571.5" stroke="#3a1aa6" stroke-width="1.5" />
<line x1="328.3" y1="571.5" x2="328.3" y2="583" stroke="#3a1aa6" stroke-width="1.5" />
<line x1="270.3" y1="626" x2="270.3" y2="751" stroke="#9a7428" stroke-width="1.6" />
<line x1="447.9" y1="626" x2="447.9" y2="751" stroke="#9a7428" stroke-width="1.6" />
<line x1="359.8" y1="570" x2="359.8" y2="975" stroke="#9a7428" stroke-width="1.6" />
<line x1="260.5" y1="751" x2="458" y2="751" stroke="#9a7428" stroke-width="1.6" />
<line x1="260.5" y1="798.3" x2="458" y2="798.3" stroke="#9a7428" stroke-width="1.6" />
<rect x="263.3" y="799.5" width="192.4" height="163.2" fill="none" stroke="#9a7428" stroke-width="1.6" />
<line x1="343.3" y1="799.5" x2="343.3" y2="962.7" stroke="#9a7428" stroke-width="1.6" />
<line x1="373" y1="799.5" x2="373" y2="962.7" stroke="#9a7428" stroke-width="1.6" />
<line x1="260.5" y1="693" x2="260.5" y2="985" stroke="#000" stroke-width="1.5" />
<line x1="458" y1="693" x2="458" y2="973" stroke="#000" stroke-width="1.5" />
<line x1="238" y1="612" x2="260.5" y2="612" stroke="#b4b4b4" stroke-width="1" />
<line x1="458" y1="612" x2="480" y2="612" stroke="#b4b4b4" stroke-width="1" />
<line x1="238" y1="634" x2="260.5" y2="634" stroke="#b4b4b4" stroke-width="1" />
<line x1="458" y1="634" x2="480" y2="634" stroke="#b4b4b4" stroke-width="1" />
<line x1="238" y1="671" x2="260.5" y2="671" stroke="#b4b4b4" stroke-width="1" />
<line x1="458" y1="671" x2="480" y2="671" stroke="#b4b4b4" stroke-width="1" />
<line x1="238" y1="707" x2="260.5" y2="707" stroke="#b4b4b4" stroke-width="1" />
<line x1="458" y1="707" x2="480" y2="707" stroke="#b4b4b4" stroke-width="1" />
<line x1="238" y1="754" x2="260.5" y2="754" stroke="#b4b4b4" stroke-width="1" />
<line x1="458" y1="754" x2="480" y2="754" stroke="#b4b4b4" stroke-width="1" />
<line x1="238" y1="787" x2="260.5" y2="787" stroke="#b4b4b4" stroke-width="1" />
<line x1="458" y1="787" x2="480" y2="787" stroke="#b4b4b4" stroke-width="1" />
<line x1="238" y1="823.5" x2="260.5" y2="823.5" stroke="#b4b4b4" stroke-width="1" />
<line x1="458" y1="823.5" x2="480" y2="823.5" stroke="#b4b4b4" stroke-width="1" />
<line x1="238" y1="858" x2="260.5" y2="858" stroke="#b4b4b4" stroke-width="1" />
<line x1="458" y1="858" x2="480" y2="858" stroke="#b4b4b4" stroke-width="1" />
<line x1="238" y1="890" x2="260.5" y2="890" stroke="#b4b4b4" stroke-width="1" />
<line x1="458" y1="890" x2="480" y2="890" stroke="#b4b4b4" stroke-width="1" />
<line x1="238" y1="935" x2="260.5" y2="935" stroke="#b4b4b4" stroke-width="1" />
<line x1="458" y1="935" x2="480" y2="935" stroke="#b4b4b4" stroke-width="1" />
<rect x="289" y="845.4" width="15.8" height="15.4" fill="#fff" stroke="#20b840" stroke-width="1.3" />
<rect x="400" y="845" width="17.7" height="15.8" fill="#fff" stroke="#20b840" stroke-width="1.3" />
<text x="293" y="858.5" font-family="Liberation Sans, sans-serif" font-size="13.5" fill="#808080" transform="translate(293,858.5) scale(0.8,1) translate(-293,-858.5)">P</text>
<text x="404.5" y="858.5" font-family="Liberation Sans, sans-serif" font-size="13.5" fill="#808080" transform="translate(404.5,858.5) scale(0.8,1) translate(-404.5,-858.5)">P</text>
<line x1="260.5" y1="975.5" x2="360" y2="975.5" stroke="#000" stroke-width="2.5" />
<line x1="360" y1="974" x2="360" y2="999" stroke="#000" stroke-width="1.3" />
<line x1="360" y1="974" x2="440" y2="974" stroke="#000" stroke-width="1.3" />
<line x1="225" y1="985" x2="360" y2="985" stroke="#000" stroke-width="1" />
<line x1="225" y1="988" x2="360" y2="988" stroke="#000" stroke-width="1" />
<circle cx="250.5" cy="968" r="3.5" fill="#e8103c" stroke="none" stroke-width="1" />
<line x1="0" y1="909.4" x2="87.5" y2="909.4" stroke="#000" stroke-width="1.5" />
<line x1="0" y1="919" x2="152" y2="919" stroke="#000" stroke-width="1.5" />
<line x1="87.5" y1="897.8" x2="149" y2="897.8" stroke="#000" stroke-width="1.5" />
<line x1="77.7" y1="919" x2="77.7" y2="998" stroke="#000" stroke-width="1.5" />
<line x1="87.5" y1="897.8" x2="87.5" y2="998" stroke="#000" stroke-width="1.5" />
<line x1="152.7" y1="919" x2="152.7" y2="998" stroke="#000" stroke-width="1.5" />
<line x1="172" y1="919" x2="172" y2="998" stroke="#000" stroke-width="1.5" />
<line x1="225" y1="919" x2="225" y2="998" stroke="#000" stroke-width="1.5" />
<line x1="243.7" y1="919" x2="243.7" y2="998" stroke="#000" stroke-width="1.5" />
<line x1="0" y1="950" x2="260" y2="950" stroke="#b4b4b4" stroke-width="1.2" />
<line x1="0" y1="991" x2="260" y2="991" stroke="#b4b4b4" stroke-width="1.2" />
<line x1="38.5" y1="909" x2="38.5" y2="950" stroke="#b4b4b4" stroke-width="1" />
<line x1="17.5" y1="950" x2="17.5" y2="991" stroke="#b4b4b4" stroke-width="1" />
<line x1="58.3" y1="950" x2="58.3" y2="991" stroke="#b4b4b4" stroke-width="1" />
<line x1="123.6" y1="950" x2="123.6" y2="991" stroke="#b4b4b4" stroke-width="1" />
<line x1="131.8" y1="919" x2="131.8" y2="950" stroke="#b4b4b4" stroke-width="1" />
<line x1="141" y1="897" x2="141" y2="919" stroke="#b4b4b4" stroke-width="1" />
<line x1="193.5" y1="950" x2="193.5" y2="991" stroke="#b4b4b4" stroke-width="1" />
<line x1="213.4" y1="919" x2="213.4" y2="950" stroke="#b4b4b4" stroke-width="1" />
<line x1="0" y1="998" x2="450" y2="998" stroke="#b4b4b4" stroke-width="1.2" />
<line x1="565.8" y1="905.5" x2="706.4" y2="905.5" stroke="#000" stroke-width="1.6" />
<line x1="565.8" y1="916" x2="706.4" y2="916" stroke="#000" stroke-width="1.6" />
<line x1="643.5" y1="916" x2="643.5" y2="999" stroke="#000" stroke-width="1.5" />
<path d="M635.5,906 Q643.5,910 643.5,916" fill="none" stroke="#999" stroke-width="1" />
<line x1="474" y1="918" x2="474" y2="999" stroke="#000" stroke-width="1.5" />
<line x1="493.3" y1="918" x2="493.3" y2="999" stroke="#000" stroke-width="1.5" />
<line x1="546" y1="918" x2="546" y2="999" stroke="#000" stroke-width="1.5" />
<line x1="565.3" y1="918" x2="565.3" y2="999" stroke="#000" stroke-width="1.5" />
<line x1="635.3" y1="905" x2="635.3" y2="999" stroke="#b4b4b4" stroke-width="1" />
<line x1="637.8" y1="905" x2="637.8" y2="999" stroke="#b4b4b4" stroke-width="1" />
<line x1="668.4" y1="905" x2="668.4" y2="999" stroke="#b4b4b4" stroke-width="1" />
<line x1="586.4" y1="905" x2="586.4" y2="932" stroke="#b4b4b4" stroke-width="1" />
<line x1="512.8" y1="918" x2="512.8" y2="956" stroke="#b4b4b4" stroke-width="1" />
<line x1="524.4" y1="956" x2="524.4" y2="989" stroke="#b4b4b4" stroke-width="1" />
<line x1="594.7" y1="956" x2="594.7" y2="989" stroke="#b4b4b4" stroke-width="1" />
<line x1="627.8" y1="956" x2="627.8" y2="989" stroke="#b4b4b4" stroke-width="1" />
<line x1="512.8" y1="989" x2="512.8" y2="999" stroke="#b4b4b4" stroke-width="1" />
<line x1="586.4" y1="989" x2="586.4" y2="999" stroke="#b4b4b4" stroke-width="1" />
<line x1="610.4" y1="989" x2="610.4" y2="999" stroke="#b4b4b4" stroke-width="1" />
<line x1="586.4" y1="932" x2="668.4" y2="932" stroke="#b4b4b4" stroke-width="1.2" />
<line x1="456" y1="956" x2="706" y2="956" stroke="#b4b4b4" stroke-width="1.2" />
<line x1="493" y1="988.7" x2="706" y2="988.7" stroke="#b4b4b4" stroke-width="1.2" />
<line x1="440" y1="974" x2="474" y2="974" stroke="#000" stroke-width="1.5" />
<line x1="474" y1="985.8" x2="493.3" y2="985.8" stroke="#000" stroke-width="1.2" />
<line x1="474" y1="989" x2="493.3" y2="989" stroke="#000" stroke-width="1.2" />
<line x1="246" y1="999.2" x2="713" y2="999.2" stroke="#3a1aa6" stroke-width="1.8" />
<line x1="558.5" y1="869" x2="558.5" y2="1001" stroke="#3a1aa6" stroke-width="1.5" />
<line x1="164" y1="870" x2="164" y2="919" stroke="#3a1aa6" stroke-width="1.5" />
<line x1="164" y1="950" x2="164" y2="952" stroke="#3a1aa6" stroke-width="1.5" />
<line x1="164" y1="990" x2="164" y2="999" stroke="#3a1aa6" stroke-width="1.5" />
<line x1="597" y1="447.7" x2="634.4" y2="447.7" stroke="#3a1aa6" stroke-width="1.5" />
<line x1="591" y1="466.9" x2="646" y2="466.9" stroke="#3a1aa6" stroke-width="1.5" />
<line x1="576" y1="514.8" x2="646" y2="514.8" stroke="#3a1aa6" stroke-width="1.5" />
<line x1="563.5" y1="550.6" x2="631" y2="550.6" stroke="#3a1aa6" stroke-width="1.5" />
<line x1="452" y1="671" x2="609.7" y2="671" stroke="#3a1aa6" stroke-width="1.5" />
<line x1="86" y1="460" x2="86" y2="537" stroke="#fff" stroke-width="1.5" stroke-dasharray="4,2"/>
<line x1="86" y1="537" x2="152" y2="537" stroke="#fff" stroke-width="1.5" stroke-dasharray="4,2"/>
<path d="M478,130.3 C480,136 480.5,140 481.6,142 C483,147 485,151 487.4,153.6 C490,156 493,156 495.6,158.3 C498,161 499,167 501.4,170 C504,173 506,174 509.6,174.6 C514,175.5 518,175 521.3,177 C524,179 525,183 527,186.3 C529.5,190 531,194 533,198 C535.5,203 537.5,208 539.5,213" fill="none" stroke="#d07080" stroke-width="1.1" />
<path d="M547,240 C548,246 548,251 549.3,254 C551,257 557,257 561,258.6 C566,261 569,264 572.6,268 C575,272 575.5,278 577.2,282 C579.5,287 583,290 586.6,293.6 C590,297 593.5,299 596,303 C599,309 600.5,318 601,325.5" fill="none" stroke="#d07080" stroke-width="1.1" />
<line x1="572.5" y1="4.2" x2="859.5" y2="4.2" stroke="#381890" stroke-width="1.8"/>
<line x1="811.7" y1="4" x2="811.7" y2="183.7" stroke="#3a1aa6" stroke-width="1.8"/>
<line x1="811.7" y1="289" x2="811.7" y2="675.3" stroke="#3a1aa6" stroke-width="1.8"/>
<line x1="811.7" y1="781.2" x2="811.7" y2="999.5" stroke="#3a1aa6" stroke-width="1.8"/>
<line x1="855.5" y1="4" x2="855.5" y2="446" stroke="#3a1aa6" stroke-width="1.8"/>
<line x1="855.5" y1="551.4" x2="855.5" y2="999.5" stroke="#3a1aa6" stroke-width="1.8"/>
<line x1="730.7" y1="467.2" x2="812" y2="467.2" stroke="#3a1aa6" stroke-width="1.8"/>
<line x1="727.6" y1="999.2" x2="859.6" y2="999.2" stroke="#3a1aa6" stroke-width="1.8"/>
<line x1="152.6" y1="1072" x2="152.6" y2="1102" stroke="#3a1aa6" stroke-width="1.8"/>
<line x1="565" y1="1081" x2="565" y2="1102.5" stroke="#3a1aa6" stroke-width="1.8"/>
<line x1="152.6" y1="1096.5" x2="287" y2="1096.5" stroke="#3a1aa6" stroke-width="1.8"/>
<line x1="431" y1="1096.5" x2="565" y2="1096.5" stroke="#3a1aa6" stroke-width="1.8"/>
<text x="735" y="244" font-family="Liberation Serif, serif" font-size="35" letter-spacing="0.45" fill="#000">5.25 m</text>
<text x="835" y="506" font-family="Liberation Serif, serif" font-size="35" letter-spacing="0.45" fill="#000">11.25 m</text>
<text x="779.8" y="712" font-family="Liberation Serif, serif" font-size="35" letter-spacing="0.45" fill="#000">6 m</text>
<text x="299" y="1115.5" font-family="Liberation Serif, serif" font-size="35" letter-spacing="0.45" fill="#000">4.675 m</text>
<rect x="930" y="574" width="760" height="381" fill="none" stroke="#707070" stroke-width="2"/>
<text x="1113.5" y="613.7" font-family="Liberation Sans, sans-serif" font-weight="bold" font-size="40.3" fill="#000">Damage identification</text>
<text x="1007.2" y="652" font-family="Liberation Sans, sans-serif" font-size="24" fill="#000">Small losses of material</text>
<text x="1007.2" y="682" font-family="Liberation Sans, sans-serif" font-size="24" fill="#000">Fracturing of stone material</text>
<text x="1007.2" y="712" font-family="Liberation Sans, sans-serif" font-size="24" fill="#000">Cracks and fissures</text>
<text x="1007.2" y="749" font-family="Liberation Sans, sans-serif" font-size="24" fill="#000">Large volume losses of stone material</text>
<text x="1007.2" y="781" font-family="Liberation Sans, sans-serif" font-size="24" fill="#000">Movement of the arc</text>
<text x="1007.2" y="811" font-family="Liberation Sans, sans-serif" font-size="24" fill="#000">Sandblasting</text>
<text x="1007.2" y="844" font-family="Liberation Sans, sans-serif" font-size="24" fill="#000">Crusts due to contamination</text>
<text x="1007.2" y="877" font-family="Liberation Sans, sans-serif" font-size="24" fill="#000">Biodeterioration</text>
<text x="1007.2" y="908" font-family="Liberation Sans, sans-serif" font-size="24" fill="#000">Damaged door</text>
<rect x="963" y="631" width="25.6" height="26" fill="url(#red)" stroke="#e8103c" stroke-width="2"/>
<rect x="963" y="665.5" width="25.6" height="24.5" fill="url(#red)" stroke="#e8103c" stroke-width="2"/>
<rect x="963" y="698.5" width="25.6" height="26" fill="url(#crk)" stroke="#e0103a" stroke-width="2"/>
<rect x="963" y="726.5" width="25.6" height="26" fill="#fff" stroke="#b01030" stroke-width="2"/>
<line x1="964" y1="751.5" x2="987.6" y2="728" stroke="#a02030" stroke-width="1.5"/>
<rect x="963" y="757" width="25.6" height="26" fill="#fff" stroke="#a020e0" stroke-width="2"/>
<line x1="975.7" y1="762" x2="975.7" y2="775" stroke="#c020e0" stroke-width="2"/>
<path d="M972 772 L979.5 772 L975.7 780 Z" fill="#c020e0"/>
<rect x="963" y="788.5" width="25.6" height="23" fill="url(#yel)" stroke="#f5b51e" stroke-width="2"/>
<rect x="963" y="816.5" width="25.6" height="26" fill="url(#pnk)" stroke="#606060" stroke-width="2"/>
<rect x="963" y="847" width="25.6" height="24" fill="url(#grn)" stroke="#20c040" stroke-width="2"/>
<rect x="963" y="875.5" width="25.6" height="25.5" fill="#fff" stroke="#20c040" stroke-width="2"/>
<text x="966.5" y="897" font-family="Liberation Sans, sans-serif" font-size="25" fill="#707070" transform="translate(966.5,897) scale(0.85,1) translate(-966.5,-897)">P</text>
</svg>
</body></html>
